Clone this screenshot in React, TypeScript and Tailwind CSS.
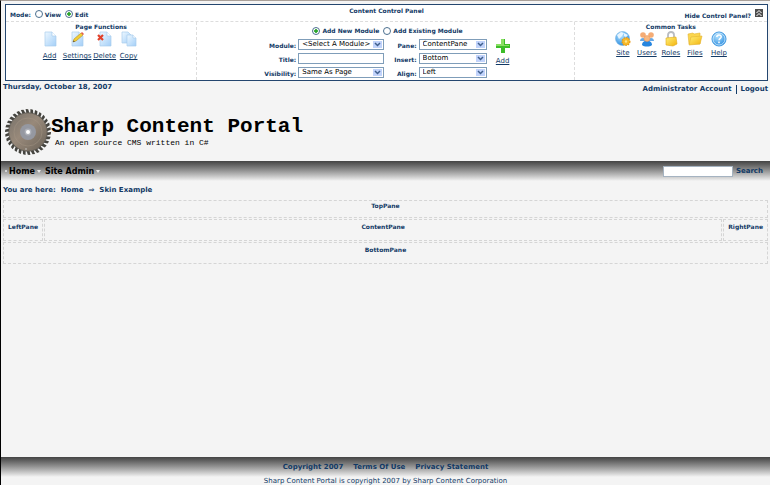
import { useState, type ReactNode } from "react";

const sans = "font-['DejaVu_Sans',Verdana,sans-serif]";

function PageIcon({ kind }: { kind: "add" | "edit" | "delete" | "copy" }) {
  return (
    <svg width="16" height="16" viewBox="0 0 16 16" aria-hidden="true">
      <defs>
        <linearGradient id="sheet" x1="0" y1="0" x2="1" y2="1">
          <stop offset="0" stopColor="#eef8ff" />
          <stop offset="1" stopColor="#a3cff8" />
        </linearGradient>
      </defs>
      {kind === "copy" ? (
        <g fill="url(#sheet)" stroke="#a9cdec" strokeWidth="0.7">
          <path d="M1 1h6l3 3v8H1z" />
          <path d="M6 4h6l3 3v8H6z" />
          <path d="M12 4v3h3" fill="#fff" />
        </g>
      ) : (
        <g fill="url(#sheet)" stroke="#a9cdec" strokeWidth="0.7">
          <path d="M3 1h7l4 4v10H3z" />
          <path d="M10 1v4h4" fill="#fff" />
        </g>
      )}
      {kind === "edit" && (
        <g>
          <path d="M4 11l1-3 7-6 2 2-7 6z" fill="#f2cf37" stroke="#b98d24" strokeWidth="0.6" />
          <path d="M12 2l1-1 2 2-1 1z" fill="#e55b4d" />
          <path d="M4 11l.6-1.6L6 10.6z" fill="#444" />
        </g>
      )}
      {kind === "delete" && (
        <path d="M1 4l5 5M6 4L1 9" stroke="#e2412a" strokeWidth="2.2" fill="none" />
      )}
    </svg>
  );
}

function TaskIcon({ kind }: { kind: "site" | "users" | "roles" | "files" | "help" }) {
  return (
    <svg width="16" height="16" viewBox="0 0 16 16" aria-hidden="true">
      <defs>
        <radialGradient id="blueBall" cx="0.4" cy="0.3" r="0.8">
          <stop offset="0" stopColor="#b6e4ff" />
          <stop offset="1" stopColor="#1c83dc" />
        </radialGradient>
        <linearGradient id="gold" x1="0" y1="0" x2="1" y2="1">
          <stop offset="0" stopColor="#fff07a" />
          <stop offset="1" stopColor="#f3b30b" />
        </linearGradient>
      </defs>
      {kind === "site" && (
        <g>
          <circle cx="7.5" cy="7.5" r="7" fill="url(#blueBall)" stroke="#78b5e4" strokeWidth="0.6" />
          <path d="M2 4l4-3 3 1-2 3-3 3zM9 2l4 2-2 2-2-1z" fill="#e7f5ff" />
          <circle cx="11" cy="10.5" r="3.8" fill="#f7b928" stroke="#e79c1a" strokeWidth="1.4" strokeDasharray="1.5 1" />
          <circle cx="11" cy="10.5" r="1.2" fill="#ffe589" />
        </g>
      )}
      {kind === "users" && (
        <g>
          <path d="M1 10c0-4 6-4 6 0zM9 10c0-4 6-4 6 0z" fill="#65a9e8" />
          <circle cx="4" cy="4" r="2.8" fill="#f5ac75" />
          <circle cx="12" cy="4" r="2.8" fill="#f5ac75" />
          <path d="M3 14c0-6 10-6 10 0-2 2-8 2-10 0z" fill="#2786df" />
          <circle cx="8" cy="7.5" r="3" fill="#f8b880" stroke="#e89057" strokeWidth="0.5" />
        </g>
      )}
      {kind === "roles" && (
        <g>
          <path d="M5 8V4c0-4 6-4 6 0v4" fill="none" stroke="#b9bcc1" strokeWidth="1.8" />
          <path d="M3 7l10-1 1 7-4 2-7-1z" fill="url(#gold)" stroke="#e1a818" strokeWidth="0.6" />
        </g>
      )}
      {kind === "files" && (
        <g stroke="#e4b432" strokeWidth="0.6">
          <path d="M1 3l5-1 1 1 6-1v11H2z" fill="#fbd64d" />
          <path d="M2 14L4 6l11-1-2 8z" fill="url(#gold)" />
        </g>
      )}
      {kind === "help" && (
        <g>
          <circle cx="8" cy="8" r="7" fill="url(#blueBall)" stroke="#3c96df" />
          <circle cx="8" cy="8" r="6" fill="none" stroke="#d4eeff" strokeWidth="0.8" />
          <path d="M5.8 6c.2-3 4.7-2.6 4.4 0-.2 1.4-2.2 1.4-2.2 3.2M8 10.6v1.6" fill="none" stroke="#fff" strokeWidth="1.5" />
        </g>
      )}
    </svg>
  );
}

function SawBlade() {
  const teeth = Array.from({ length: 30 }, (_, i) => i * 12);
  return (
    <svg width="46" height="48" viewBox="0 0 46 48" aria-hidden="true">
      <defs>
        <linearGradient id="steel" x1="0" y1="0" x2="1" y2="1">
          <stop offset="0" stopColor="#77726a" />
          <stop offset="0.45" stopColor="#98897a" />
          <stop offset="1" stopColor="#6a6257" />
        </linearGradient>
      </defs>
      {teeth.map((a) => (
        <path key={a} d="M21.5 5.5L20.6 1l2.6 0.2L24.5 5.5z" fill="#45443f" transform={`rotate(${a} 23 24)`} />
      ))}
      <circle cx="23" cy="24" r="19.2" fill="url(#steel)" stroke="#5a5750" strokeWidth="0.8" />
      <circle cx="23" cy="24" r="14" fill="none" stroke="#a99a88" strokeWidth="0.4" />
      <circle cx="23" cy="24" r="8" fill="#9598a1" />
      <circle cx="23" cy="24" r="3.4" fill="#aeb1b9" />
      <circle cx="23" cy="24" r="2" fill="#fff" />
      <circle cx="21" cy="41" r="0.7" fill="#ddd" />
    </svg>
  );
}

function Radio({ name, label, checked, onChange }: { name: string; label: string; checked: boolean; onChange: () => void }) {
  return (
    <label className="flex items-center gap-0.5">
      <input
        type="radio"
        name={name}
        checked={checked}
        onChange={onChange}
        className="size-2 appearance-none rounded-full border border-[#4b6f8f] bg-white outline-none checked:border-[#4b6f8f] checked:bg-[radial-gradient(circle,#2ba52b_35%,#ffffff_50%)]"
      />
      <span>{label}</span>
    </label>
  );
}

function Select({ id, value, width }: { id: string; value: string; width: string }) {
  return (
    <span className={`relative block ${width}`}>
      <select id={id} defaultValue={value} className="block h-[11px] w-full appearance-none border border-[#7f9db9] bg-white pl-[3px] text-[7px] leading-[9px] font-normal text-black">
        <option>{value}</option>
      </select>
      <span className="pointer-events-none absolute top-0.5 right-0.5 flex h-[7px] w-[9px] items-center justify-center bg-[#c1d3fb]">
        <svg width="7" height="5" viewBox="0 0 7 5" aria-hidden="true">
          <path d="M1 1l2.5 2.5L6 1" fill="none" stroke="#40608e" strokeWidth="1.5" />
        </svg>
      </span>
    </span>
  );
}

function IconLink({ label, icon, gap, width }: { label: string; icon: ReactNode; gap: string; width: string }) {
  return (
    <a href="#" className={`flex flex-col items-center font-normal ${gap} ${width}`}>
      {icon}
      <span className="text-[7px] leading-[9px] underline">{label}</span>
    </a>
  );
}

function ControlPanel() {
  const [mode, setMode] = useState("Edit");
  const [source, setSource] = useState("new");
  return (
    <section className="mt-[3px] mr-0.5 ml-1 border border-[#24466f] bg-white text-[6px] leading-[9px] font-bold">
      <header className="grid h-[17px] grid-cols-3 border-b border-dashed border-[#dddddd] px-1">
        <div className="flex items-center gap-1 pt-0.5">
          <span>Mode:</span>
          <Radio name="mode" label="View" checked={mode === "View"} onChange={() => setMode("View")} />
          <Radio name="mode" label="Edit" checked={mode === "Edit"} onChange={() => setMode("Edit")} />
        </div>
        <h2 className="pt-px text-center">Content Control Panel</h2>
        <button className="flex items-center justify-end gap-1">
          <span className="pt-1">Hide Control Panel?</span>
          <svg width="8" height="8" viewBox="0 0 8 8" aria-hidden="true">
            <path d="M0 0h8v8H0z" fill="#4e4e4e" />
            <path d="M1.5 4L4 1.5 6.5 4M1.5 7L4 4.5 6.5 7" fill="none" stroke="#fff" />
          </svg>
        </button>
      </header>
      <div className="grid h-[58px] grid-cols-[191fr_377fr_192fr]">
        <div className="border-r border-dashed border-[#dddddd]">
          <h3 className="text-center">Page Functions</h3>
          <div className="flex justify-center pr-6">
            <IconLink label="Add" width="w-6" gap="gap-[5px]" icon={<PageIcon kind="add" />} />
            <IconLink label="Settings" width="w-[31px]" gap="gap-[5px]" icon={<PageIcon kind="edit" />} />
            <IconLink label="Delete" width="w-6" gap="gap-[5px]" icon={<PageIcon kind="delete" />} />
            <IconLink label="Copy" width="w-6" gap="gap-[5px]" icon={<PageIcon kind="copy" />} />
          </div>
        </div>
        <div className="border-r border-dashed border-[#dddddd] pt-1">
          <div className="flex justify-center gap-1 pl-1">
            <Radio name="source" label="Add New Module" checked={source === "new"} onChange={() => setSource("new")} />
            <Radio name="source" label="Add Existing Module" checked={source === "existing"} onChange={() => setSource("existing")} />
          </div>
          <div className="flex justify-center gap-2 pt-1 pl-1">
            <div className="grid grid-cols-[auto_auto_auto_auto] items-center gap-x-0.5 gap-y-[3px] text-right">
              <label htmlFor="module" className="pt-0.5">Module:</label>
              <Select id="module" value="<Select A Module>" width="w-[86px]" />
              <label htmlFor="pane" className="pt-0.5 pl-2">Pane:</label>
              <Select id="pane" value="ContentPane" width="w-[68px]" />
              <label htmlFor="title" className="pt-0.5">Title:</label>
              <input id="title" type="text" className="h-[11px] w-[86px] border border-[#7f9db9] bg-white px-1 text-[7px]" />
              <label htmlFor="insert" className="pt-0.5 pl-2">Insert:</label>
              <Select id="insert" value="Bottom" width="w-[68px]" />
              <label htmlFor="visibility" className="pt-0.5">Visibility:</label>
              <Select id="visibility" value="Same As Page" width="w-[86px]" />
              <label htmlFor="align" className="pt-0.5 pl-2">Align:</label>
              <Select id="align" value="Left" width="w-[68px]" />
            </div>
            <IconLink
              label="Add"
              width="w-4"
              gap="gap-1"
              icon={
                <svg width="14" height="14" viewBox="0 0 14 14" aria-hidden="true">
                  <path d="M5 0h4v5h5v4H9v5H5V9H0V5h5z" fill="#3cbd29" />
                  <path d="M5 0h3v6h5v1H0V5h5z" fill="#88df62" />
                </svg>
              }
            />
          </div>
        </div>
        <div>
          <h3 className="text-center">Common Tasks</h3>
          <div className="flex justify-center">
            <IconLink label="Site" width="w-6" gap="gap-0.5" icon={<TaskIcon kind="site" />} />
            <IconLink label="Users" width="w-6" gap="gap-0.5" icon={<TaskIcon kind="users" />} />
            <IconLink label="Roles" width="w-6" gap="gap-0.5" icon={<TaskIcon kind="roles" />} />
            <IconLink label="Files" width="w-6" gap="gap-0.5" icon={<TaskIcon kind="files" />} />
            <IconLink label="Help" width="w-6" gap="gap-0.5" icon={<TaskIcon kind="help" />} />
          </div>
        </div>
      </div>
    </section>
  );
}

function MenuArrow() {
  return (
    <svg width="4" height="3" viewBox="0 0 4 3" aria-hidden="true">
      <path d="M0 0h4L2 3z" fill="#e8e8e8" />
    </svg>
  );
}

const pane = "border border-dashed border-[#d5d5d5] text-center";

export default function App() {
  return (
    <div className={`flex min-h-screen flex-col border-t border-l border-t-[#a89f98] border-l-black bg-[#f4f4f4] text-[7px] leading-[9px] font-bold text-[#123a66] ${sans}`}>
      <ControlPanel />
      <div className="flex justify-between px-0.5 pt-0.5">
        <time>Thursday, October 18, 2007</time>
        <div className="flex gap-1 pt-0.5">
          <a href="#">Administrator Account</a>
          <a href="#" className="border-l border-[#123a66] pl-1">Logout</a>
        </div>
      </div>
      <div className="flex items-center px-1 pt-3.5 pb-[5px] font-['Liberation_Mono','Courier_New',monospace] text-black">
        <SawBlade />
        <div>
          <h1 className="text-[21px] leading-[22px]">Sharp Content Portal</h1>
          <p className="pl-1 text-[8px] leading-[10px] font-normal">An open source CMS written in C#</p>
        </div>
      </div>
      <nav className="flex h-5 items-center justify-between bg-linear-to-b from-[#444444] to-[#f4f4f4] pr-[7px] pl-1">
        <div className="flex gap-1 text-[8px] text-black">
          <a href="#" className="flex items-center gap-0.5">
            <span className="size-0.5 rounded-full bg-[#e8e8e8]" />
            Home
            <MenuArrow />
          </a>
          <a href="#" className="flex items-center gap-0.5">
            Site Admin
            <MenuArrow />
          </a>
        </div>
        <form className="flex items-center gap-[3px]" onSubmit={(e) => e.preventDefault()}>
          <input type="text" aria-label="Search" className="h-[11px] w-[70px] border border-[#a5b3c1] bg-white px-1" />
          <button>Search</button>
        </form>
      </nav>
      <div className="flex gap-[5px] px-0.5 py-[5px]">
        <span>You are here:</span>
        <a href="#">Home</a>
        <span>⇒</span>
        <a href="#">Skin Example</a>
      </div>
      <main className="flex grow flex-col gap-px px-0.5 text-[6px]">
        <section className={`h-[18px] ${pane}`}>TopPane</section>
        <div className="grid h-[22px] grid-cols-[auto_1fr_auto] gap-px">
          <section className={`px-1 pt-0.5 ${pane}`}>LeftPane</section>
          <section className={`pt-0.5 ${pane}`}>ContentPane</section>
          <section className={`px-1 pt-0.5 ${pane}`}>RightPane</section>
        </div>
        <section className={`h-[22px] pt-0.5 ${pane}`}>BottomPane</section>
      </main>
      <footer className="text-center">
        <div className="flex h-5 items-center justify-center gap-2.5 bg-linear-to-b from-[#444444] to-[#f4f4f4]">
          <span>Copyright 2007</span>
          <a href="#">Terms Of Use</a>
          <a href="#">Privacy Statement</a>
        </div>
        <p className="leading-[8px] font-normal">Sharp Content Portal is copyright 2007 by Sharp Content Corporation</p>
      </footer>
    </div>
  );
}
